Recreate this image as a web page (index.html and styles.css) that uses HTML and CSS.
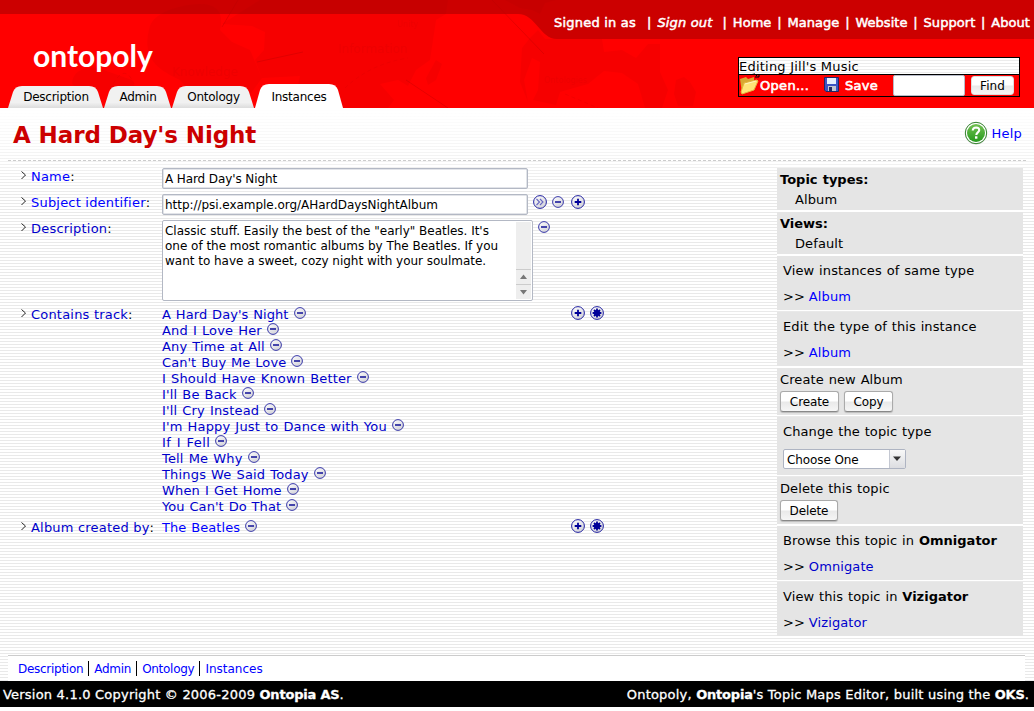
FILE: index.html
```html
<!DOCTYPE html>
<html lang="en">
<head>
<meta charset="utf-8">
<title>A Hard Day's Night - Ontopoly</title>
<link rel="stylesheet" href="styles.css">
</head>
<body>
<svg class="defs" width="0" height="0">
  <defs>
    <linearGradient id="ball" x1="0" y1="0" x2="0.7" y2="1"><stop offset="0" stop-color="#fff"/><stop offset="1" stop-color="#d2d2d8"/></linearGradient>
    <linearGradient id="tabfill" x1="0" y1="0" x2="0" y2="1"><stop offset="0.75" stop-color="#f1f1f1"/><stop offset="1" stop-color="#dcdcdc"/></linearGradient>
    <linearGradient id="green" x1="0" y1="0" x2="0" y2="1"><stop offset="0" stop-color="#72c052"/><stop offset="1" stop-color="#279b1e"/></linearGradient>
    <symbol id="minus" viewBox="0 0 12 12"><circle cx="6" cy="6" r="5.4" fill="url(#ball)" stroke="#3838a8"/><path d="M3 6H9" stroke="#1c1c9c" stroke-width="1.6"/></symbol>
    <symbol id="plus" viewBox="0 0 14 14"><circle cx="7" cy="7" r="6.4" fill="url(#ball)" stroke="#2020a0"/><path d="M3.7 7H10.3M7 3.7V10.3" stroke="#000099" stroke-width="1.8"/></symbol>
    <symbol id="star" viewBox="0 0 14 14"><circle cx="7" cy="7" r="6.4" fill="url(#ball)" stroke="#2020a0"/><circle cx="7" cy="7" r="3" fill="#000099"/><path d="M2.6 7H11.4M7 2.6V11.4M4 4L10 10M10 4L4 10" stroke="#000099" stroke-width="1.8"/></symbol>
    <symbol id="more" viewBox="0 0 14 14"><circle cx="7" cy="7" r="6.4" fill="url(#ball)" stroke="#2020a0"/><path d="M3.5 4L6.5 7L3.5 10M7 4L10 7L7 10" fill="none" stroke="#6666c0" stroke-width="1.1"/></symbol>
  </defs>
</svg>

<header class="header">
  <svg class="backdrop" width="1034" height="108" viewBox="0 0 1034 108">
    <path fill="#cc0000" d="M0 0H1034V39H557C540 39 536 14 518 14H0Z"/>
    <g fill="#a00000" fill-opacity="0.09">
      <path d="M260 0H448L446 14L436 20L430 60L416 70L408 86L398 80L380 84L394 100L388 108H304L297 90L300 76L262 78L255 60L264 50L265 32L252 26L222 24Z"/>
      <path d="M150 26C154 14 175 5 200 4C218 4 224 14 220 30L232 42L250 50L262 78L240 108H204L180 80C160 70 140 60 150 26Z"/>
      <path d="M72 84C72 72 84 66 98 68L132 80L136 90H80Z"/>
      <path d="M436 60L442 64L436 80L428 85L426 78Z"/>
      <path d="M522 48L530 38L538 30L545 39H602L604 52L622 50L636 58L648 44H660V72L668 90L662 108H645L638 84L622 73L604 71L588 84L560 92L556 105L533 100L538 90L540 62L532 58L524 80L528 102L520 82Z"/>
      <path d="M676 80L684 77L690 82L696 92L693 106H678L674 94Z"/>
      <path d="M505 0L520 8L532 10L540 14L545 3L556 0Z"/>
    </g>
    <path fill="none" stroke="#b80000" stroke-opacity="0.35" d="M238 0L222 27M257 62L303 52M406 80L448 108M492 0L544 54"/>
    <g fill="none" stroke="#d80000" stroke-opacity="0.3" stroke-dasharray="4 3"><path d="M110 90Q124 60 134 84M345 88Q370 64 408 58M565 94L598 108"/></g>
    <g class="map-labels"><text x="172" y="76">Knowledge</text><text x="338" y="53">Information</text><text class="tiny" x="544" y="83">Ontologies</text><text class="tiny" x="397" y="27">Unity</text></g>
  </svg>
  <nav class="account">
    <span class="a1">Signed in as</span><span class="a2">|</span><em>Sign out</em><span class="a3">|</span><a>Home</a><i>|</i><a>Manage</a><i>|</i><a>Website</a><i>|</i><a>Support</a><i>|</i><a>About</a>
  </nav>
  <div class="logo">ontopoly</div>
  <div class="masthead">
    <nav class="tabs">
      <a class="tab t1"><svg width="96" height="22"><path fill="url(#tabfill)" d="M0 22L5 6Q7 0 14 0H81Q88 0 90 6L95 22Z"/></svg><span>Description</span></a>
      <a class="tab t2"><svg width="68" height="22"><path fill="url(#tabfill)" d="M0 22L5 6Q7 0 14 0H53Q60 0 62 6L67 22Z"/></svg><span>Admin</span></a>
      <a class="tab t3"><svg width="83" height="22"><path fill="url(#tabfill)" d="M0 22L5 6Q7 0 14 0H68Q75 0 77 6L82 22Z"/></svg><span>Ontology</span></a>
      <a class="tab t4"><svg width="88" height="24"><path fill="#fff" d="M0 24L5 6Q7 0 14 0H74Q81 0 83 6L88 24Z"/></svg><span>Instances</span></a>
    </nav>
    <div class="toolbox">
      <div class="editing">Editing Jill's Music</div>
      <div class="tools">
        <svg class="folder" width="20" height="21" viewBox="0 0 20 21"><path d="M1 4L7 2L9 4L15 2V14L3 18Z" fill="#d8a830"/><path d="M2 17L5 8L18 5L19 6L15 15L3 19Z" fill="#ffe477" stroke="#e4b53f"/><path d="M6 9L17 6" stroke="#fff6be"/></svg>
        <span class="open">Open...</span>
        <svg class="disk" width="15" height="15" viewBox="0 0 15 15"><path d="M.5.5H14.5V14.5H2L.5 13Z" fill="#3c55c4" stroke="#222764"/><path d="M3 1H12V7H3Z" fill="#e8f1ff"/><path d="M4 9H12V14H4Z" fill="#c4c7d1"/><path d="M5 10H8V14H5Z" fill="#222a65"/></svg>
        <span class="save">Save</span>
        <span class="query"></span>
        <button class="btn find">Find</button>
      </div>
    </div>
    <svg class="arrow" width="8" height="6" viewBox="0 0 8 6"><path d="M0 1.5Q3-.5 5 3M3 4H7V1" fill="none" stroke="#000"/></svg>
  </div>
</header>

<main class="page">
  <div class="titlebar">
    <h1>A Hard Day's Night</h1>
    <a class="help"><svg width="24" height="24" viewBox="0 0 24 24"><circle cx="12" cy="12.5" r="11" fill="#999" opacity=".45"/><circle cx="12" cy="12" r="10.7" fill="#fff" stroke="#30802a"/><circle cx="12" cy="12" r="9" fill="url(#green)"/><path d="M8.7 9.5Q9 6.5 12.2 6.5Q15.4 6.7 15.2 9.4C15 11.4 12.3 11.4 12.3 14" fill="none" stroke="#fff" stroke-width="2.1"/><rect x="11" y="15.3" width="2.4" height="2.4" fill="#fff"/></svg><span>Help</span></a>
  </div>
  <div class="columns">
    <section class="fields">
      <div class="field r-name"><div class="label"><svg class="chev" width="5" height="9"><path d="M.5.5L4.5 4L.5 8"/></svg><a class="fresh">Name</a>:</div><div class="value"><div class="input">A Hard Day's Night</div></div></div>
      <div class="field r-subj"><div class="label"><svg class="chev" width="5" height="9"><path d="M.5.5L4.5 4L.5 8"/></svg><a class="fresh">Subject identifier</a>:</div><div class="value"><div class="input url">http://psi.example.org/AHardDaysNightAlbum</div></div><div class="icons subj-icons"><svg width="14" height="14"><use href="#more"/></svg><svg width="12" height="12"><use href="#minus"/></svg><svg width="14" height="14"><use href="#plus"/></svg></div></div>
      <div class="field r-desc"><div class="label"><svg class="chev" width="5" height="9"><path d="M.5.5L4.5 4L.5 8"/></svg><a>Description</a>:</div><div class="value"><div class="area"><p>Classic stuff. Easily the best of the "early" Beatles. It's<br><span class="l2">one of the most romantic albums by The Beatles. If you</span><br>want to have a sweet, cozy night with your soulmate.</p><div class="scroll"><svg width="15" height="30"><path d="M0 0.5H15M0 15.5H15" stroke="#ccc"/><path d="M4 10L7.5 5.5L11 10Z M4 21L7.5 25.5L11 21Z" fill="#777"/></svg></div></div></div><div class="icons desc-icons"><svg width="12" height="12"><use href="#minus"/></svg></div></div>
      <div class="field r-tracks"><div class="label"><svg class="chev" width="5" height="9"><path d="M.5.5L4.5 4L.5 8"/></svg><a>Contains track</a>:</div>
        <ul class="value tracks">
          <li class="snug"><a>A Hard Day's Night</a><svg width="12" height="12"><use href="#minus"/></svg></li>
          <li><a>And I Love Her</a><svg width="12" height="12"><use href="#minus"/></svg></li>
          <li><a>Any Time at All</a><svg width="12" height="12"><use href="#minus"/></svg></li>
          <li class="snug"><a>Can't Buy Me Love</a><svg width="12" height="12"><use href="#minus"/></svg></li>
          <li><a>I Should Have Known Better</a><svg width="12" height="12"><use href="#minus"/></svg></li>
          <li><a>I'll Be Back</a><svg width="12" height="12"><use href="#minus"/></svg></li>
          <li><a>I'll Cry Instead</a><svg width="12" height="12"><use href="#minus"/></svg></li>
          <li><a>I'm Happy Just to Dance with You</a><svg width="12" height="12"><use href="#minus"/></svg></li>
          <li class="wide"><a>If I Fell</a><svg width="12" height="12"><use href="#minus"/></svg></li>
          <li><a>Tell Me Why</a><svg width="12" height="12"><use href="#minus"/></svg></li>
          <li><a>Things We Said Today</a><svg width="12" height="12"><use href="#minus"/></svg></li>
          <li><a>When I Get Home</a><svg width="12" height="12"><use href="#minus"/></svg></li>
          <li class="snug"><a>You Can't Do That</a><svg width="12" height="12"><use href="#minus"/></svg></li>
        </ul>
        <div class="icons add-icons"><svg width="14" height="14"><use href="#plus"/></svg><svg width="14" height="14"><use href="#star"/></svg></div></div>
      <div class="field r-album"><div class="label"><svg class="chev" width="5" height="9"><path d="M.5.5L4.5 4L.5 8"/></svg><a>Album created by</a>:</div>
        <ul class="value tracks"><li class="snug"><a class="fresh">The Beatles</a><svg width="12" height="12"><use href="#minus"/></svg></li></ul>
        <div class="icons add-icons"><svg width="14" height="14"><use href="#plus"/></svg><svg width="14" height="14"><use href="#star"/></svg></div></div>
    </section>
    <aside class="side">
      <div class="box pair"><b>Topic types:</b><span>Album</span></div>
      <div class="box pair"><b>Views:</b><span>Default</span></div>
      <div class="box link"><p>View instances of same type</p><p>&gt;&gt; <a>Album</a></p></div>
      <div class="box link"><p>Edit the type of this instance</p><p>&gt;&gt; <a>Album</a></p></div>
      <div class="box action"><p>Create new Album</p><div class="buttons"><button class="btn create">Create</button><button class="btn copy">Copy</button></div></div>
      <div class="box change"><p>Change the topic type</p><div class="select"><span>Choose One</span><i><svg width="9" height="6"><path d="M0 .5H8L4 5Z" fill="#333"/></svg></i></div></div>
      <div class="box action"><p>Delete this topic</p><div class="buttons"><button class="btn delete">Delete</button></div></div>
      <div class="box link"><p>Browse this topic in <b>Omnigator</b></p><p>&gt;&gt; <a class="seen">Omnigate</a></p></div>
      <div class="box link"><p>View this topic in <b>Vizigator</b></p><p>&gt;&gt; <a class="seen">Vizigator</a></p></div>
    </aside>
  </div>
  <nav class="bottomnav"><a>Description</a><a>Admin</a><a>Ontology</a><a>Instances</a></nav>
</main>
<footer class="footer"><span class="f1">Version 4.1.0 Copyright © 2006-2009 <b>Ontopia AS</b>.</span><span class="f2">Ontopoly, <b>Ontopia</b>'s Topic Maps Editor, built using the <b>OKS</b>.</span></footer>
</body>
</html>
```
FILE: styles.css
```css
* { box-sizing: border-box; }
body { margin: 0; width: 1034px; height: 711px; overflow: hidden; background: #fff; font: 13px/16px "DejaVu Sans", Verdana, sans-serif; color: #000; }
h1, p, ul { margin: 0; padding: 0; }
a { color: #0000cc; white-space: nowrap; }
a.fresh { color: #0000ff; }
svg { display: block; flex: none; }
.defs { position: absolute; }

.header { position: relative; height: 108px; background: #f00; overflow: hidden; }
.backdrop { position: absolute; left: 0; top: 0; }
.map-labels { font: 12px "DejaVu Sans", sans-serif; fill: #cc0000; fill-opacity: 0.2; }
.map-labels .tiny { font-size: 8px; }
.account { position: relative; display: flex; height: 45px; padding: 15px 4px 0 0; justify-content: flex-end; white-space: nowrap; color: #fff; -webkit-text-stroke: 0.5px #fff; }
.account a { color: #fff; letter-spacing: .05px; }
.account i { font-style: normal; width: 16px; text-align: center; }
.account em { letter-spacing: .15px; }
.account .a1 { letter-spacing: .22px; }
.account .a2 { margin: 0 6px 0 11px; }
.account .a3 { margin: 0 6px 0 10px; }
.logo { position: relative; height: 39px; margin-top: -7px; padding-left: 33px; color: #fff; font: bold 30px/34px Lato, sans-serif; width: 160px; }
.masthead { position: relative; display: flex; justify-content: space-between; align-items: flex-end; height: 51px; margin-top: -20px; padding: 0 14px 0 8px; }
.tabs { display: flex; align-items: flex-end; height: 24px; }
.tab { position: relative; height: 22px; color: #000; font-size: 12px; letter-spacing: -0.25px; }
.tab svg { position: absolute; left: 0; bottom: 0; }
.tab span { position: relative; display: block; text-align: center; padding-top: 3px; }
.t1 { width: 96px; } .t2 { width: 68px; } .t3 { width: 83px; } .t4 { width: 88px; }
.toolbox { width: 282px; height: 40px; margin-bottom: 11px; border: 1px solid #000; }
.editing { height: 17px; border-bottom: 1px solid #000; background: repeating-linear-gradient(#fff 0 2px, #ececec 2px 3px); font-size: 13px; line-height: 17px; letter-spacing: .22px; }
.tools { display: flex; align-items: center; height: 21px; color: #fff; background: #f00; font-size: 13px; }
.open, .save { letter-spacing: .3px; -webkit-text-stroke: 0.6px #fff; }
.open { width: 65px; padding-left: 1px; }
.save { width: 49px; padding-left: 1px; margin-left: 5px; }
.query { width: 72px; height: 21px; background: #fff; border: 1px solid #b8bcc8; border-radius: 2px; }
.disk { margin-top: -2px; }
.arrow { position: absolute; left: 752px; bottom: 29px; }

.btn { height: 21px; padding: 0; border: 1px solid #aaa; border-bottom-color: #888; border-radius: 3px; background: linear-gradient(#fff 0 48%, #e9e9e9 52%, #f6f6f6); color: #000; font: 12px/18px "DejaVu Sans", sans-serif; letter-spacing: -0.1px; box-shadow: 0 1px 1px #bbb; }
.btn.find { width: 43px; height: 19px; margin-left: 6px; border-color: #ddd; box-shadow: none; line-height: 16px; letter-spacing: .1px; }

.page { height: 573px; background: linear-gradient(#fff 0, rgba(255,255,255,0) 90px), repeating-linear-gradient(#fff 0 2px, #e9e9e9 2px 3px); }
.titlebar { display: flex; justify-content: space-between; height: 53px; margin: 0 8px; padding: 10px 4px 0 5px; border-bottom: 1px dashed #ccc; }
h1 { color: #c00; font-size: 23px; line-height: 34px; letter-spacing: -0.1px; }
.help { display: flex; gap: 4px; height: 24px; margin-top: 3px; color: #00f; line-height: 25px; letter-spacing: .2px; }
.columns { display: flex; justify-content: space-between; height: 494px; padding: 7px 11px 0 21px; }
.fields { width: 600px; }
.field { display: flex; }
.label { display: flex; width: 141px; letter-spacing: .2px; line-height: 17px; }
.chev { margin: 3px 5px 0 0; fill: none; stroke: #222; }
.r-name, .r-subj { height: 26px; }
.r-desc { height: 86px; }
.r-tracks { height: 213px; }
.input { width: 366px; height: 21px; padding: 0 2px; border: 1px solid #b3b8c4; border-radius: 2px; box-shadow: inset 0 0 0 .5px #c5cad3; background: #fff; font-size: 12px; line-height: 20px; letter-spacing: -.1px; }
.input.url { letter-spacing: -.04px; }
.area { display: flex; justify-content: space-between; width: 371px; height: 81px; padding: 1px; border: 1px solid #b3b8c4; border-radius: 2px; background: #fff; white-space: nowrap; font-size: 12px; line-height: 15px; }
.area p { padding: 2px 0 0 1px; letter-spacing: -.02px; }
.scroll { display: flex; align-items: flex-end; width: 15px; height: 77px; background: #eee; }
.icons { display: flex; height: 14px; align-items: center; }
.subj-icons { margin: 1px 0 0 5px; gap: 5px; }
.subj-icons svg:last-child { margin: -1px 0 0 2px; }
.desc-icons { margin-left: 5px; }
.tracks { width: 409px; list-style: none; letter-spacing: .17px; word-spacing: .7px; }
.tracks li { display: flex; gap: 5px; height: 16px; line-height: 17px; }
.tracks .snug { letter-spacing: .06px; }
.tracks .wide { letter-spacing: .5px; }
.tracks svg { margin-top: 1px; }
.add-icons { gap: 5px; }

.side { width: 246px; letter-spacing: .1px; word-spacing: .6px; white-space: nowrap; }
.box { background: #e5e5e5; margin-bottom: 2px; box-shadow: 0 1px #fff; height: 54px; }
.side a { color: #00f; margin-left: -1px; }
.side a.seen { color: #0000cc; }
.box b { letter-spacing: 0; }
.pair { height: 42px; padding: 3px 3px 0; }
.pair b, .pair span { display: block; height: 20px; line-height: 17px; }
.pair span { padding-left: 15px; }
.link { padding: 6px 6px 0; }
.link p { height: 26px; line-height: 18px; }
.action { height: 47px; padding: 3px 3px 0; }
.action p { height: 20px; line-height: 18px; }
.buttons { display: flex; gap: 5px; }
.create { width: 59px; } .copy { width: 49px; } .delete { width: 58px; }
.change { height: 58px; padding: 6px 6px 0; }
.change p { height: 26px; line-height: 18px; }
.select { display: flex; justify-content: space-between; width: 123px; height: 20px; border: 1px solid #aeb4c2; background: #fff; border-radius: 2px; font-size: 12px; line-height: 20px; letter-spacing: -.1px; word-spacing: 0; padding-left: 3px; }
.select i { display: flex; align-items: center; justify-content: center; width: 16px; border-left: 1px solid #c4c8d2; background: linear-gradient(#f8f8f8, #dcdde1); }

.bottomnav { display: flex; height: 26px; margin: 0 9px 0 8px; padding: 5px 0 0 5px; border-top: 1px solid #ccc; background: #fff; font-size: 12px; letter-spacing: -.28px; }
.bottomnav a { height: 15px; padding: 0 5px; border-left: 1px solid #000; color: #00f; }
.bottomnav a:first-child { border-left: 0; }
.bottomnav a:last-child { letter-spacing: 0; }
.footer { display: flex; justify-content: space-between; height: 26px; padding: 0 5px 0 3px; background: #000; color: #fff; line-height: 27px; font-size: 13px; letter-spacing: .21px; white-space: nowrap; -webkit-text-stroke: 0.3px #fff; }
.footer b { letter-spacing: -.2px; }
```
